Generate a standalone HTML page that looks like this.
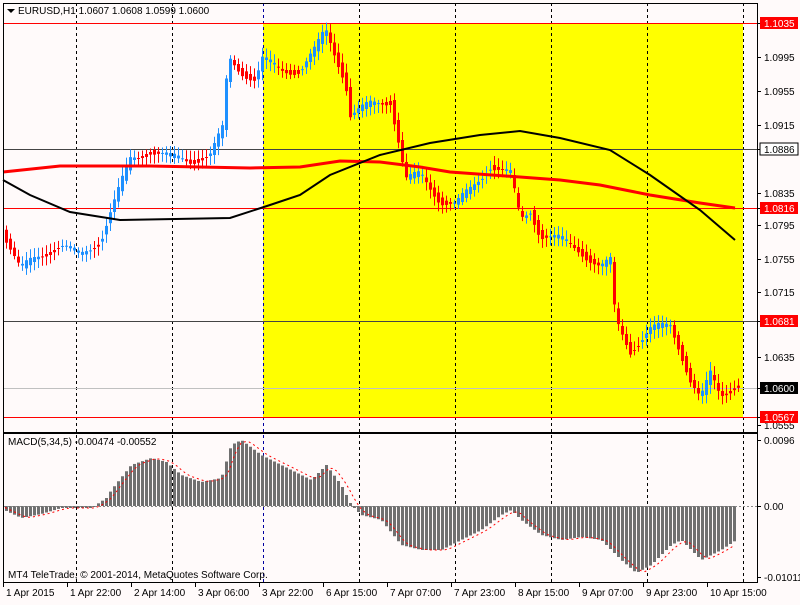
<!DOCTYPE html><html><head><meta charset="utf-8"><style>
body{margin:0;background:#fffafa;width:800px;height:600px;overflow:hidden;font-family:"Liberation Sans",sans-serif}
svg text{font-family:"Liberation Sans",sans-serif;font-size:10px}
</style></head><body>
<svg id="s" width="800" height="600" xmlns="http://www.w3.org/2000/svg">
<rect width="800" height="600" fill="#fffafa"/>
<rect x="263" y="23" width="480" height="394" fill="#ffff00"/>
<g stroke="#000" stroke-dasharray="3,3" stroke-width="1">
<line x1="76.5" y1="3" x2="76.5" y2="582"/><line x1="172.5" y1="3" x2="172.5" y2="582"/>
<line x1="263.5" y1="3" x2="263.5" y2="582" stroke="#0000a0"/><line x1="359.5" y1="3" x2="359.5" y2="582"/>
<line x1="455.5" y1="3" x2="455.5" y2="582"/><line x1="551.5" y1="3" x2="551.5" y2="582"/>
<line x1="647.5" y1="3" x2="647.5" y2="582"/><line x1="743.5" y1="3" x2="743.5" y2="582"/>
</g>
<line x1="3" y1="23.5" x2="757" y2="23.5" stroke="#f00"/>
<line x1="3" y1="208.5" x2="757" y2="208.5" stroke="#f00"/>
<line x1="3" y1="417.5" x2="757" y2="417.5" stroke="#f00"/>
<line x1="3" y1="149.5" x2="757" y2="149.5" stroke="#444"/>
<line x1="3" y1="321.5" x2="757" y2="321.5" stroke="#444"/>
<line x1="3" y1="388.5" x2="757" y2="388.5" stroke="#c0c0c0"/>
<g id="c"></g>
<polyline fill="none" stroke="#f00" stroke-width="3" points="3,172 60,166 100,166 150,166 250,168 300,167 340,161 380,162 420,167 450,172 520,177 560,180 600,185 650,195 700,203 735,208"/>
<polyline fill="none" stroke="#000" stroke-width="2" points="3,180 30,195 70,212 120,220 230,218 270,205 300,195 330,175 380,155 430,143 480,135 520,131 560,138 610,150 650,175 700,210 735,240"/>
<g id="m"></g>
<line x1="3" y1="506.5" x2="757" y2="506.5" stroke="#888" stroke-dasharray="2,2"/>
<polyline id="sig" fill="none" stroke="#f00" stroke-dasharray="2,3"/>
<rect x="3.5" y="3.5" width="754" height="429" fill="none" stroke="#000"/>
<rect x="3.5" y="433.5" width="754" height="149" fill="none" stroke="#000"/>
<polygon points="7,9 15,9 11,13" fill="#000"/>
<text x="18" y="14">EURUSD,H1  1.0607 1.0608 1.0599 1.0600</text>
<text x="8" y="445">MACD(5,34,5) -0.00474 -0.00552</text>
<text x="8" y="578">MT4 TeleTrade, © 2001-2014, MetaQuotes Software Corp.</text>
<g id="ax"></g>
</svg>
<script>
var N='http://www.w3.org/2000/svg',S=document.getElementById('s');
function el(p,t,a){var e=document.createElementNS(N,t);for(var k in a)e.setAttribute(k,a[k]);p.appendChild(e);return e}
function interp(pts,x){for(var i=1;i<pts.length;i++){if(x<=pts[i][0]){var a=pts[i-1],b=pts[i];return a[1]+(b[1]-a[1])*(x-a[0])/(b[0]-a[0]);}}return pts[pts.length-1][1]}
var P=[[3,232],[20,270],[30,262],[40,255],[60,245],[80,256],[100,240],[110,212],[130,160],[150,150],[170,158],[190,160],[210,155],[222,130],[228,58],[240,70],[255,80],[262,60],[280,70],[300,70],[315,50],[325,30],[335,55],[345,80],[350,115],[370,105],[390,100],[400,150],[405,180],[420,175],[440,200],[455,205],[470,190],[490,165],[510,175],[520,220],[530,210],[540,235],[560,240],[580,250],[600,268],[610,262],[615,320],[630,350],[650,330],[670,325],[680,350],[690,380],[700,400],[710,375],[720,395],[735,385]];
var C=document.getElementById('c');
for(var x=5;x<=737;x+=4){var o=interp(P,x-3),c=interp(P,x+1),r=Math.sin(x*1.7)*5;c+=r;var up=c<o;var hi=Math.min(o,c)-3-Math.abs(Math.sin(x*3.1))*6,lo=Math.max(o,c)+3+Math.abs(Math.cos(x*2.3))*6;var col=up?'#1e90ff':'#f00';
el(C,'line',{x1:x+1.5,x2:x+1.5,y1:hi,y2:lo,stroke:col});el(C,'rect',{x:x,y:Math.min(o,c),width:3,height:Math.max(1,Math.abs(c-o)),fill:col});}
var M=[[3,510],[20,518],[40,514],[60,508],[90,508],[105,498],[110,490],[130,465],[150,458],[165,462],[180,475],[200,482],[220,478],[230,445],[240,440],[260,455],[290,470],[310,480],[325,465],[340,485],[350,505],[360,515],[380,520],[400,545],[420,550],[440,550],[460,540],[480,530],[500,515],[510,510],[520,520],[540,535],[560,540],[580,537],[600,540],[620,560],[635,573],[650,565],[670,545],[680,540],[700,560],[720,550],[735,540]];
var G=document.getElementById('m'),sp=[];
for(var x=5;x<=735;x+=4){var y=interp(M,x);el(G,'rect',{x:x,y:Math.min(y,506),width:3,height:Math.max(1,Math.abs(y-506)),fill:'#707070'});sp.push(x+','+(interp(M,x-10)*0.55+interp(M,x-4)*0.45));}
document.getElementById('sig').setAttribute('points',sp.join(' '));
var A=document.getElementById('ax');
var labs=[[23,'1.1035','r'],[57,'1.0995'],[91,'1.0955'],[125,'1.0915'],[149,'1.0886','w'],[193,'1.0835'],[208,'1.0816','r'],[225,'1.0795'],[259,'1.0755'],[292,'1.0715'],[321,'1.0681','r'],[357,'1.0635'],[388,'1.0600','b'],[425,'1.0555'],[417,'1.0567','r'],[440,'0.0096'],[506,'0.00'],[577,'-0.01011']];
labs.forEach(function(l){var y=l[0];el(A,'line',{x1:757,x2:761,y1:y+.5,y2:y+.5,stroke:'#000'});
if(l[2]){var bg=l[2]=='r'?'#f00':l[2]=='b'?'#000':'#fff';el(A,'rect',{x:760,y:y-6,width:38,height:12,fill:bg,stroke:l[2]=='w'?'#000':'none'});}
var t=el(A,'text',{x:764,y:y+4,fill:(l[2]=='r'||l[2]=='b')?'#fff':'#000'});t.textContent=l[1];});
var tl=['1 Apr 2015','1 Apr 22:00','2 Apr 14:00','3 Apr 06:00','3 Apr 22:00','6 Apr 15:00','7 Apr 07:00','7 Apr 23:00','8 Apr 15:00','9 Apr 07:00','9 Apr 23:00','10 Apr 15:00'];
tl.forEach(function(s,i){var x=i==0?3:67+(i-1)*64;el(A,'line',{x1:x+.5,x2:x+.5,y1:583,y2:587,stroke:'#000'});var t=el(A,'text',{x:x+3,y:596});t.textContent=s;});
</script>
</body></html>
